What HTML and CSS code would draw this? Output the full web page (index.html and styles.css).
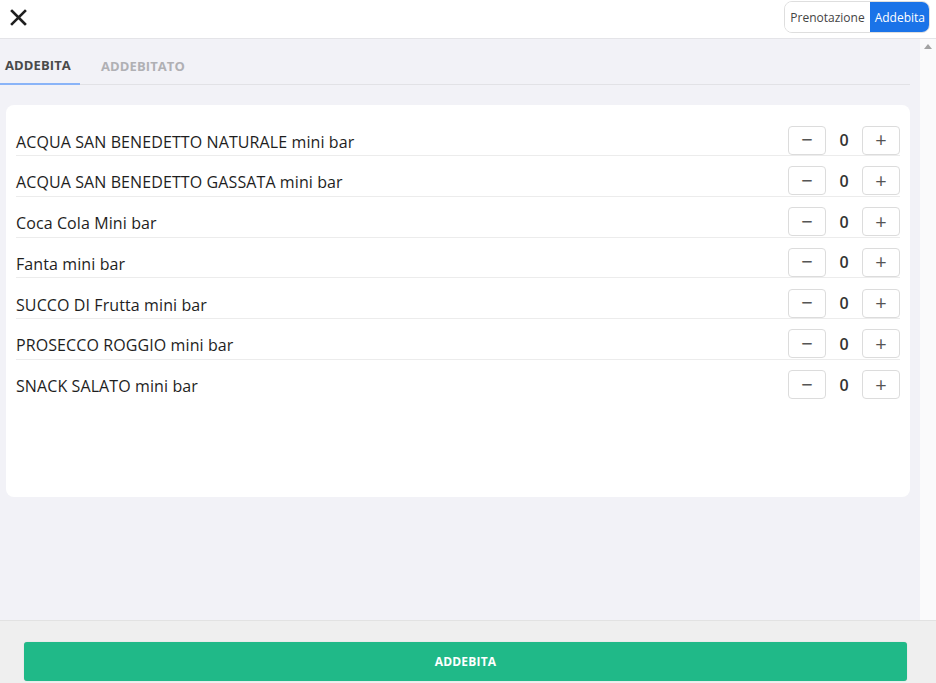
FILE: index.html
```html
<!DOCTYPE html>
<html lang="it">
<head>
<meta charset="utf-8">
<title>Addebita</title>
<link rel="stylesheet" href="styles.css">
</head>
<body>
<header class="topbar">
  <button class="close" aria-label="Chiudi">
    <svg width="17" height="17" viewBox="0 0 17 17"><path d="M2 2 L15 15 M15 2 L2 15" stroke="#1f1f1f" stroke-width="2.6" stroke-linecap="square"/></svg>
  </button>
  <div class="segmented">
    <span class="seg">Prenotazione</span>
    <span class="seg seg-active">Addebita</span>
  </div>
</header>
<div class="main">
  <div class="content">
    <nav class="tabs">
      <span class="tab tab-active">ADDEBITA</span>
      <span class="tab">ADDEBITATO</span>
    </nav>
    <section class="card">
      <div class="row"><span class="name">ACQUA SAN BENEDETTO NATURALE mini bar</span><div class="qty"><button class="qbtn">&minus;</button><span class="num">0</span><button class="qbtn">+</button></div></div>
      <div class="row"><span class="name">ACQUA SAN BENEDETTO GASSATA mini bar</span><div class="qty"><button class="qbtn">&minus;</button><span class="num">0</span><button class="qbtn">+</button></div></div>
      <div class="row"><span class="name">Coca Cola Mini bar</span><div class="qty"><button class="qbtn">&minus;</button><span class="num">0</span><button class="qbtn">+</button></div></div>
      <div class="row"><span class="name">Fanta mini bar</span><div class="qty"><button class="qbtn">&minus;</button><span class="num">0</span><button class="qbtn">+</button></div></div>
      <div class="row"><span class="name">SUCCO DI Frutta mini bar</span><div class="qty"><button class="qbtn">&minus;</button><span class="num">0</span><button class="qbtn">+</button></div></div>
      <div class="row"><span class="name">PROSECCO ROGGIO mini bar</span><div class="qty"><button class="qbtn">&minus;</button><span class="num">0</span><button class="qbtn">+</button></div></div>
      <div class="row row-last"><span class="name">SNACK SALATO mini bar</span><div class="qty"><button class="qbtn">&minus;</button><span class="num">0</span><button class="qbtn">+</button></div></div>
    </section>
  </div>
  <div class="scrollbar"><span class="arrow"></span></div>
</div>
<footer class="footer">
  <button class="primary">ADDEBITA</button>
</footer>
</body>
</html>
```
FILE: styles.css
```css
* { box-sizing: border-box; }
html, body { margin: 0; padding: 0; }
body {
  width: 936px;
  height: 683px;
  overflow: hidden;
  display: flex;
  flex-direction: column;
  font-family: "Open Sans", "Liberation Sans", sans-serif;
  background: #f2f2f7;
  color: #222;
}
button { font-family: inherit; }

.topbar {
  height: 39px;
  flex: none;
  background: #fff;
  border-bottom: 1px solid #e4e4e8;
  display: flex;
  justify-content: space-between;
  align-items: flex-start;
}
.close {
  border: 0;
  background: none;
  padding: 0;
  margin: 9px 0 0 10px;
  width: 17px;
  height: 17px;
  display: flex;
}
.segmented {
  margin: 1px 6px 0 0;
  height: 32px;
  display: flex;
  border: 1px solid #dedede;
  border-radius: 8px;
  overflow: hidden;
  font-size: 12px;
}
.seg {
  display: flex;
  align-items: center;
  padding: 0 5px;
  color: #444;
  background: #fff;
}
.seg-active {
  background: #1a73e8;
  color: #fff;
  padding: 0 4px 0 5px;
}

.main {
  flex: 1;
  display: flex;
  min-height: 0;
}
.content {
  flex: 1;
  background: #f2f2f7;
  padding-right: 10px;
}
.scrollbar {
  width: 16px;
  flex: none;
  background: #fafafb;
  display: flex;
  justify-content: center;
  padding-top: 5px;
}
.arrow {
  width: 0;
  height: 0;
  border-left: 4px solid transparent;
  border-right: 4px solid transparent;
  border-bottom: 5px solid #a3a3a3;
}

.tabs {
  height: 46px;
  display: flex;
  border-bottom: 1px solid #e2e2e6;
}
.tab {
  display: flex;
  align-items: center;
  padding: 8px 20px 0 21px;
  font-size: 13px;
  font-weight: 700;
  color: #b0b0b4;
  letter-spacing: 0.1px;
}
.tab-active {
  width: 80px;
  padding: 8px 0 0 5px;
  color: #4a4a4a;
  border-bottom: 2px solid #8ab4f8;
  margin-bottom: -1px;
}

.card {
  margin: 20px 0 0 6px;
  height: 392px;
  background: #fff;
  border-radius: 8px;
  padding: 20px 10px 0 10px;
}
.row {
  height: 31px;
  margin-bottom: 9.8px;
  display: flex;
  align-items: center;
  justify-content: space-between;
  border-bottom: 1px solid #ececec;
}
.row-last { border-bottom-color: transparent; }
.name {
  font-size: 16px;
  letter-spacing: 0.1px;
  color: #1e1e1e;
  padding-top: 3px;
}
.qty {
  display: flex;
  align-items: center;
  height: 30px;
}
.qbtn {
  width: 38px;
  height: 29px;
  border: 1px solid #dcdcdc;
  border-radius: 4px;
  background: #fff;
  color: #555;
  font-size: 20px;
  line-height: 1;
  padding: 0;
  display: flex;
  align-items: center;
  justify-content: center;
}
.num {
  width: 36px;
  text-align: center;
  font-size: 16px;
  font-weight: 600;
  color: #333;
}

.footer {
  height: 63px;
  flex: none;
  background: #efefef;
  border-top: 1px solid #e2e2e2;
  padding: 21px 29px 0 24px;
}
.primary {
  width: 100%;
  height: 39px;
  border: 0;
  border-radius: 3px;
  background: #20b988;
  color: #fff;
  font-size: 12px;
  font-weight: 700;
  letter-spacing: 0.2px;
  box-shadow: 0 0 1px rgba(0,0,0,0.2);
}
```
